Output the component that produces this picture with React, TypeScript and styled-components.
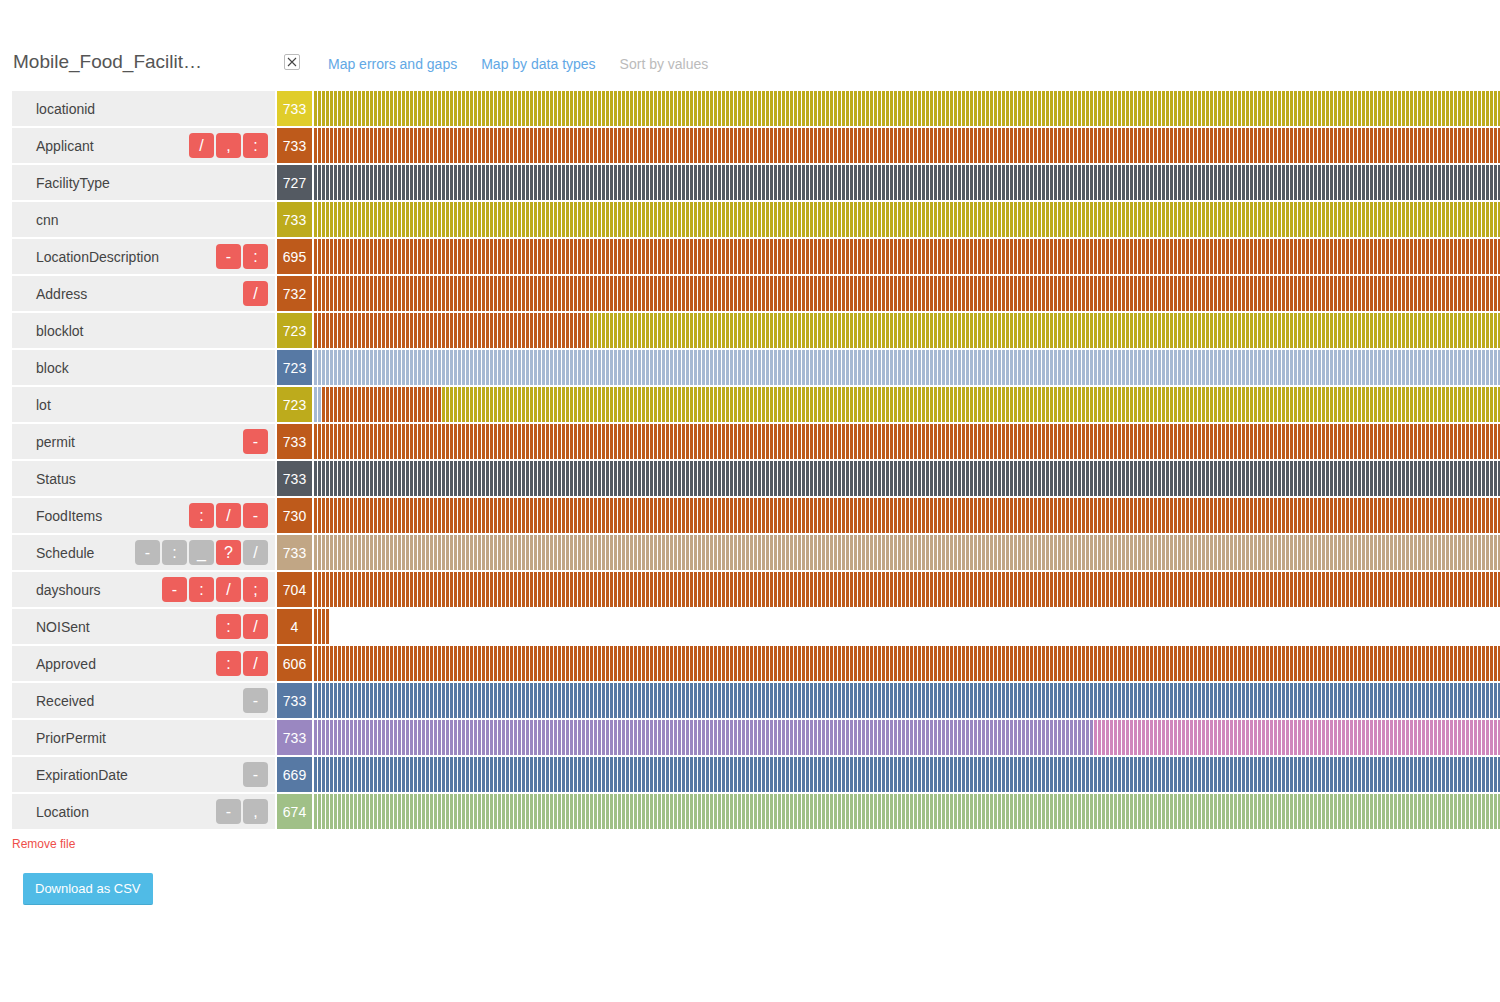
import React, { useState } from "react";
import styled, { createGlobalStyle } from "styled-components";

const colors = {
  yellow: "#e0cd2a",
  olive: "#bdab1c",
  orange: "#be5a1b",
  slate: "#545a62",
  blue: "#5779a4",
  sky: "#a6b9d3",
  tan: "#c1a685",
  purple: "#9a87c1",
  pink: "#d087bd",
  green: "#a0c087",
  red: "#ee5f5b",
  muted: "#bbbbbb",
};

type ColorName = keyof typeof colors;

interface Segment {
  color: ColorName;
  count: number;
}

interface Field {
  name: string;
  count: number;
  color: ColorName;
  segments: Segment[];
  marks: string;
  muted: string;
}

const BAR_PITCH = 4;

const field = (
  name: string,
  count: number,
  color: ColorName,
  marks = "",
  muted = "",
  segments: Segment[] = [{ color, count }]
): Field => ({ name, count, color, marks, muted, segments });

const fields: Field[] = [
  field("locationid", 733, "yellow", "", "", [{ color: "olive", count: 733 }]),
  field("Applicant", 733, "orange", "/,:"),
  field("FacilityType", 727, "slate"),
  field("cnn", 733, "olive"),
  field("LocationDescription", 695, "orange", "-:"),
  field("Address", 732, "orange", "/"),
  field("blocklot", 723, "olive", "", "", [
    { color: "orange", count: 69 },
    { color: "olive", count: 654 },
  ]),
  field("block", 723, "blue", "", "", [{ color: "sky", count: 723 }]),
  field("lot", 723, "olive", "", "", [
    { color: "sky", count: 2 },
    { color: "orange", count: 30 },
    { color: "olive", count: 691 },
  ]),
  field("permit", 733, "orange", "-"),
  field("Status", 733, "slate"),
  field("FoodItems", 730, "orange", ":/-"),
  field("Schedule", 733, "tan", "-:_?/", "-:_/"),
  field("dayshours", 704, "orange", "-:/;"),
  field("NOISent", 4, "orange", ":/"),
  field("Approved", 606, "orange", ":/"),
  field("Received", 733, "blue", "-", "-"),
  field("PriorPermit", 733, "purple", "", "", [
    { color: "purple", count: 195 },
    { color: "pink", count: 538 },
  ]),
  field("ExpirationDate", 669, "blue", "-", "-"),
  field("Location", 674, "green", "-,", "-,"),
];

const GlobalStyle = createGlobalStyle`
  *, *::before, *::after { box-sizing: border-box; }
  body {
    margin: 0;
    background: #fff;
    color: #444;
    font-family: "Liberation Sans", Arial, sans-serif;
    font-size: 14px;
  }
  button { font-family: inherit; cursor: pointer; }
`;

const Page = styled.main`
  padding: 48px 0 48px 12px;
  overflow: hidden;
`;

const Header = styled.header`
  display: flex;
  align-items: center;
  height: 28px;
  margin-bottom: 15px;
`;

const Heading = styled.div`
  display: flex;
  align-items: center;
  justify-content: space-between;
  width: 288px;
  padding-left: 1px;
`;

const Title = styled.h1`
  margin: 0;
  color: #555;
  font-size: 19px;
  font-weight: 400;
  line-height: 28px;
`;

const CloseButton = styled.button`
  display: grid;
  place-items: center;
  width: 16px;
  height: 16px;
  padding: 0;
  border: 1px solid #bbb;
  border-radius: 2px;
  background: #fff;
  color: #444;
`;

const Modes = styled.nav`
  display: flex;
  gap: 24px;
  padding: 4px 0 0 28px;
`;

const ModeButton = styled.button<{ $color: string }>`
  padding: 0;
  border: 0;
  background: none;
  color: ${(p) => p.$color};
  font-size: 14px;
  line-height: 20px;
`;

const FieldTable = styled.table`
  width: 100%;
  table-layout: fixed;
  border-collapse: collapse;
`;

const FieldRow = styled.tr`
  height: 37px;
`;

const NameCell = styled.th`
  width: 265px;
  padding: 0 2px 2px 0;
  font-weight: 400;
  text-align: left;
`;

const NameBox = styled.div`
  display: flex;
  align-items: center;
  justify-content: space-between;
  height: 35px;
  padding: 0 7px 0 24px;
  background: #eee;
`;

const Marks = styled.div`
  display: flex;
  gap: 2px;
`;

const MarkButton = styled.button<{ $muted: boolean }>`
  width: 25px;
  height: 25px;
  padding: 0;
  border: 0;
  border-radius: 4px;
  background: ${(p) => (p.$muted ? colors.muted : colors.red)};
  color: #fff;
  font-size: 16px;
  line-height: 25px;
  text-align: center;
`;

const CountCell = styled.td`
  width: 37px;
  padding: 0 2px 2px 0;
`;

const CountBox = styled.div<{ $color: string }>`
  height: 35px;
  background: ${(p) => p.$color};
  color: #fff;
  line-height: 36px;
  text-align: center;
`;

const BarsCell = styled.td`
  padding: 0 0 2px;
  overflow: hidden;
`;

const Bars = styled.div`
  display: flex;
  height: 35px;
  overflow: hidden;
`;

const BarRun = styled.div<{ $color: string }>`
  flex: none;
  background: repeating-linear-gradient(
    to right,
    ${(p) => p.$color} 0 3px,
    #fff 3px ${BAR_PITCH}px
  );
`;

const Footer = styled.footer`
  display: flex;
  flex-direction: column;
  align-items: flex-start;
  gap: 20px;
  padding-top: 4px;
`;

const RemoveButton = styled.button`
  padding: 0;
  border: 0;
  background: none;
  color: #ee4f4a;
  font-size: 12px;
  line-height: 18px;
`;

const DownloadButton = styled.button`
  height: 32px;
  margin-left: 11px;
  padding: 0 12px;
  border: 0;
  border-bottom: 1px solid #45a9d0;
  border-radius: 2px;
  background: #50bbe6;
  color: #fff;
  font-size: 13px;
  line-height: 30px;
`;

function Mark({ symbol, initiallyMuted }: { symbol: string; initiallyMuted: boolean }) {
  const [muted, setMuted] = useState(initiallyMuted);
  return (
    <MarkButton type="button" $muted={muted} aria-pressed={!muted} onClick={() => setMuted(!muted)}>
      {symbol}
    </MarkButton>
  );
}

export default function App() {
  return (
    <>
      <GlobalStyle />
      <Page>
        <Header>
          <Heading>
            <Title>Mobile_Food_Facilit…</Title>
            <CloseButton type="button" aria-label="Close">
              <svg width="10" height="10" viewBox="0 0 10 10" fill="none" stroke="currentColor" strokeWidth="1.1">
                <path d="M1 1 9 9M9 1 1 9" />
              </svg>
            </CloseButton>
          </Heading>
          <Modes>
            <ModeButton type="button" $color="#62a8e5">Map errors and gaps</ModeButton>
            <ModeButton type="button" $color="#62a8e5">Map by data types</ModeButton>
            <ModeButton type="button" $color="#bbb">Sort by values</ModeButton>
          </Modes>
        </Header>
        <FieldTable>
          <tbody>
            {fields.map((f) => (
              <FieldRow key={f.name}>
                <NameCell scope="row">
                  <NameBox>
                    {f.name}
                    <Marks>
                      {[...f.marks].map((m) => (
                        <Mark key={m} symbol={m} initiallyMuted={f.muted.includes(m)} />
                      ))}
                    </Marks>
                  </NameBox>
                </NameCell>
                <CountCell>
                  <CountBox $color={colors[f.color]}>{f.count}</CountBox>
                </CountCell>
                <BarsCell>
                  <Bars>
                    {f.segments.map((s) => (
                      <BarRun key={s.color} $color={colors[s.color]} style={{ width: s.count * BAR_PITCH }} />
                    ))}
                  </Bars>
                </BarsCell>
              </FieldRow>
            ))}
          </tbody>
        </FieldTable>
        <Footer>
          <RemoveButton type="button">Remove file</RemoveButton>
          <DownloadButton type="button">Download as CSV</DownloadButton>
        </Footer>
      </Page>
    </>
  );
}
